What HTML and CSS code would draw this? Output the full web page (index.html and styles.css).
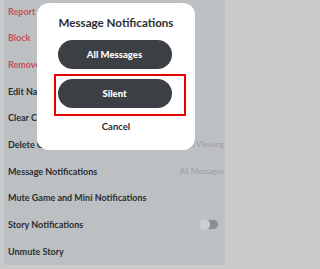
FILE: index.html
```html
<!DOCTYPE html>
<html>
<head>
<meta charset="utf-8">
<link rel="stylesheet" href="styles.css">
</head>
<body>
<div class="screen">
  <div class="panel">
    <ul class="menu">
      <li class="row danger"><span>Report</span></li>
      <li class="row danger"><span>Block</span></li>
      <li class="row danger"><span>Remove Friend</span></li>
      <li class="row"><span>Edit Name</span></li>
      <li class="row"><span>Clear Conversation</span></li>
      <li class="row"><span>Delete Chats</span><span class="value">After Viewing</span></li>
      <li class="row"><span>Message Notifications</span><span class="value">All Messages</span></li>
      <li class="row"><span>Mute Game and Mini Notifications</span></li>
      <li class="row"><span>Story Notifications</span><span class="toggle"><span class="knob"></span></span></li>
      <li class="row"><span>Unmute Story</span></li>
    </ul>
  </div>
  <div class="modal">
    <div class="modal-title">Message Notifications</div>
    <button class="pill">All Messages</button>
    <button class="pill">Silent</button>
    <div class="cancel">Cancel</div>
  </div>
  <div class="highlight"></div>
</div>
</body>
</html>
```
FILE: styles.css
```css
html, body {
  margin: 0;
  padding: 0;
  background: #c9cacb;
}
body {
  width: 228px;
  height: 269px;
  overflow: hidden;
  font-family: Lato, "Open Sans", sans-serif;
}
.screen {
  position: relative;
  width: 228px;
  height: 269px;
}
.panel {
  margin-left: 4px;
  width: 221px;
  height: 265px;
  background: #bcc0c2;
}
.menu {
  list-style: none;
  margin: 0;
  padding: 6px 1px 0 4px;
  display: flex;
  flex-direction: column;
  gap: 16.7px;
}
.row {
  height: 10px;
  display: flex;
  align-items: center;
  justify-content: space-between;
  font-size: 9px;
  font-weight: 700;
  color: #2b2e31;
  white-space: nowrap;
}
.row.danger {
  color: #c4505c;
}
.value {
  font-size: 7.8px;
  font-weight: 400;
  color: #9b9ea1;
}
.toggle {
  position: relative;
  width: 18px;
  height: 9px;
  margin-right: 6px;
  border-radius: 5px;
  background: #8c8f92;
}
.knob {
  position: absolute;
  left: -1px;
  top: -1px;
  width: 11px;
  height: 11px;
  border-radius: 50%;
  background: #cbcdcf;
}
.modal {
  position: absolute;
  left: 37px;
  top: 3px;
  width: 158px;
  height: 147px;
  background: #ffffff;
  border-radius: 12px;
  display: flex;
  flex-direction: column;
  align-items: center;
  box-sizing: border-box;
  padding-top: 12px;
}
.modal-title {
  font-size: 11.6px;
  font-weight: 700;
  color: #2b2e31;
  line-height: 16px;
  margin-bottom: 9px;
}
.pill {
  width: 114px;
  height: 29px;
  border: none;
  border-radius: 15px;
  background: #3c4044;
  color: #ffffff;
  font-family: Lato, "Open Sans", sans-serif;
  font-size: 9.5px;
  font-weight: 900;
  margin-bottom: 10px;
  margin-right: 3px;
  padding: 0;
}
.cancel {
  margin-top: 3px;
  font-size: 9.5px;
  font-weight: 700;
  color: #2b2e31;
  line-height: 12px;
}
.highlight {
  position: absolute;
  left: 54px;
  top: 74px;
  width: 132px;
  height: 42px;
  box-sizing: border-box;
  border: 2.5px solid #e60000;
}
```
